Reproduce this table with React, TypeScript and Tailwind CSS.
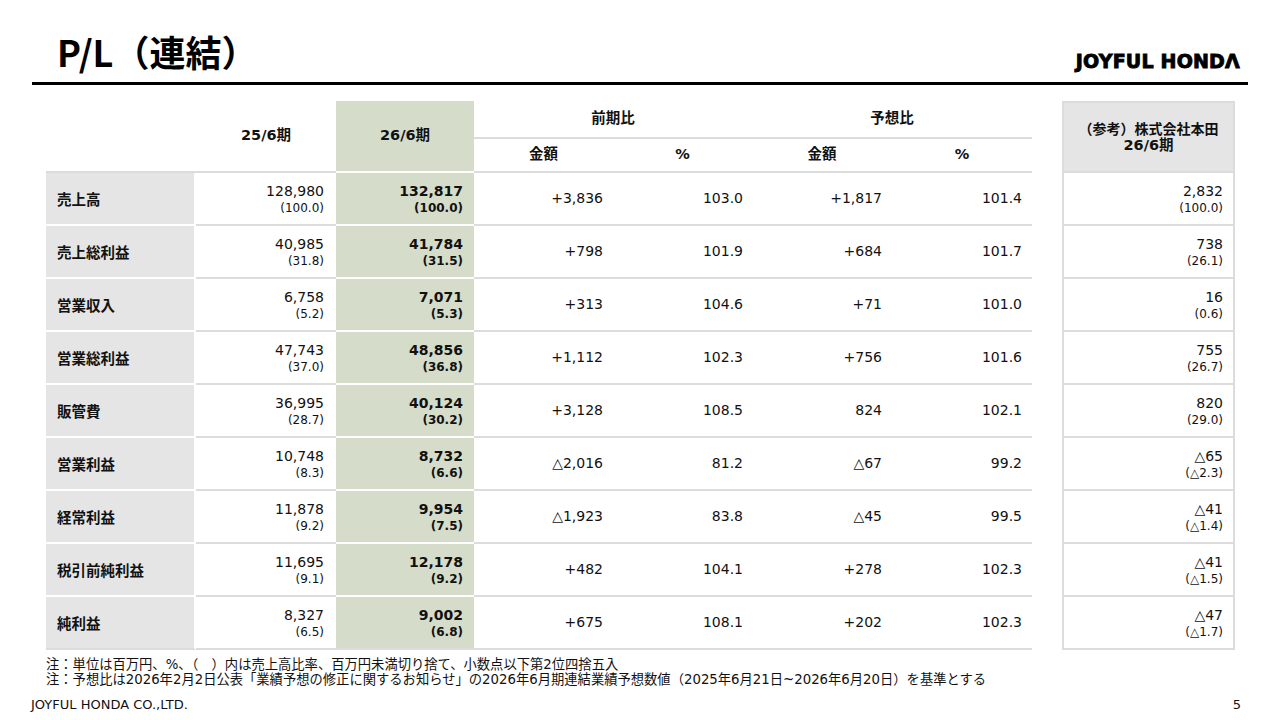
import React from "react";

const FONT = '"DejaVu Sans", "Noto Sans CJK JP", sans-serif';
const JP = '"Noto Sans CJK JP", "DejaVu Sans", sans-serif';

type Row = [string, string, string, string, string, string, string, string, string, string, string];

const rows: Row[] = [
  ["売上高", "128,980", "(100.0)", "132,817", "(100.0)", "+3,836", "103.0", "+1,817", "101.4", "2,832", "(100.0)"],
  ["売上総利益", "40,985", "(31.8)", "41,784", "(31.5)", "+798", "101.9", "+684", "101.7", "738", "(26.1)"],
  ["営業収入", "6,758", "(5.2)", "7,071", "(5.3)", "+313", "104.6", "+71", "101.0", "16", "(0.6)"],
  ["営業総利益", "47,743", "(37.0)", "48,856", "(36.8)", "+1,112", "102.3", "+756", "101.6", "755", "(26.7)"],
  ["販管費", "36,995", "(28.7)", "40,124", "(30.2)", "+3,128", "108.5", "824", "102.1", "820", "(29.0)"],
  ["営業利益", "10,748", "(8.3)", "8,732", "(6.6)", "△2,016", "81.2", "△67", "99.2", "△65", "(△2.3)"],
  ["経常利益", "11,878", "(9.2)", "9,954", "(7.5)", "△1,923", "83.8", "△45", "99.5", "△41", "(△1.4)"],
  ["税引前純利益", "11,695", "(9.1)", "12,178", "(9.2)", "+482", "104.1", "+278", "102.3", "△41", "(△1.5)"],
  ["純利益", "8,327", "(6.5)", "9,002", "(6.8)", "+675", "108.1", "+202", "102.3", "△47", "(△1.7)"],
];

function TwoLine({ main, sub, bold }: { main: string; sub: string; bold?: boolean }) {
  return (
    <>
      <div className={`text-[14px] leading-[18px] ${bold ? "font-bold" : ""}`}>{main}</div>
      <div className={`text-[12px] leading-[16px] ${bold ? "font-bold" : ""}`}>{sub}</div>
    </>
  );
}

export default function App() {
  return (
    <div
      className="w-[1280px] h-[720px] bg-white text-[#111] flex flex-col overflow-hidden"
      style={{ fontFamily: FONT }}
    >
      {/* Header */}
      <div className="mx-[32px] h-[85px] border-b-[3px] border-black flex justify-between shrink-0">
        <div
          className="pl-[25px] pt-[33px] text-[36px] leading-none font-bold text-black"
          style={{ fontFamily: JP }}
        >
          P/L（連結）
        </div>
        <div
          className="pr-[8px] pt-[52px] text-[19px] leading-none font-bold text-black tracking-[0.2px] [-webkit-text-stroke:0.9px_black]"
          style={{ fontFamily: '"DejaVu Sans", sans-serif' }}
        >
          JOYFUL HONDΛ
        </div>
      </div>

      {/* Tables */}
      <div className="mt-[16px] ml-[46px] flex gap-[30px] shrink-0">
        {/* Main table */}
        <div className="w-[986px] flex flex-col">
          {/* Header */}
          <div className="flex h-[72px] text-[14.5px] font-bold">
            <div className="w-[150px] border-b-2 border-[#dcdcdc]" />
            <div className="w-[140px] border-b-2 border-[#dcdcdc] flex items-center justify-center">25/6期</div>
            <div className="w-[138px] bg-[#d5dcca] border-b-2 border-white flex items-center justify-center">26/6期</div>
            <div className="w-[278px] flex flex-col">
              <div className="h-[38px] border-b-2 border-[#dcdcdc] flex items-center justify-center">前期比</div>
              <div className="h-[34px] border-b-2 border-[#dcdcdc] flex">
                <div className="w-[139px] flex items-center justify-center">金額</div>
                <div className="w-[139px] flex items-center justify-center">%</div>
              </div>
            </div>
            <div className="w-[280px] flex flex-col">
              <div className="h-[38px] border-b-2 border-[#dcdcdc] flex items-center justify-center">予想比</div>
              <div className="h-[34px] border-b-2 border-[#dcdcdc] flex">
                <div className="w-[140px] flex items-center justify-center">金額</div>
                <div className="w-[140px] flex items-center justify-center">%</div>
              </div>
            </div>
          </div>
          {/* Body */}
          {rows.map((r, i) => {
            const last = i === rows.length - 1;
            const gray = "border-b-2 border-[#dcdcdc]";
            const colored = last ? "border-b-2 border-[#dcdcdc]" : "border-b-2 border-white";
            return (
              <div key={r[0]} className="flex h-[53px]">
                <div
                  className={`w-[150px] bg-[#e5e5e5] ${colored} border-r-2 border-r-white pl-[11px] flex items-center text-[14.5px] font-bold`}
                  style={{ fontFamily: JP }}
                >
                  {r[0]}
                </div>
                <div className={`w-[140px] ${gray} pr-[12px] flex flex-col items-end justify-center`}>
                  <TwoLine main={r[1]} sub={r[2]} />
                </div>
                <div className={`w-[138px] bg-[#d5dcca] ${colored} pr-[11px] flex flex-col items-end justify-center`}>
                  <TwoLine main={r[3]} sub={r[4]} bold />
                </div>
                <div className={`w-[139px] ${gray} pr-[10px] flex items-center justify-end text-[14px]`}>{r[5]}</div>
                <div className={`w-[139px] ${gray} pr-[9px] flex items-center justify-end text-[14px]`}>{r[6]}</div>
                <div className={`w-[140px] ${gray} pr-[10px] flex items-center justify-end text-[14px]`}>{r[7]}</div>
                <div className={`w-[140px] ${gray} pr-[10px] flex items-center justify-end text-[14px]`}>{r[8]}</div>
              </div>
            );
          })}
        </div>

        {/* Reference table */}
        <div className="w-[173px] flex flex-col border-x-2 border-t-2 border-[#dcdcdc]">
          <div
            className="h-[70px] bg-[#e5e5e5] border-b-2 border-[#dcdcdc] flex flex-col items-center justify-center text-[14px] leading-[17px] font-bold"
            style={{ fontFamily: JP }}
          >
            <div>（参考）株式会社本田</div>
            <div style={{ fontFamily: FONT }} className="text-[14.5px]">26/6期</div>
          </div>
          {rows.map((r) => (
            <div
              key={r[0]}
              className="h-[53px] border-b-2 border-[#dcdcdc] pr-[10px] flex flex-col items-end justify-center"
            >
              <TwoLine main={r[9]} sub={r[10]} />
            </div>
          ))}
        </div>
      </div>

      {/* Notes */}
      <div className="ml-[46px] mt-[7px] text-[13.3px] leading-[15px] text-[#111] shrink-0">
        <div>注：単位は百万円、%、（　）内は売上高比率、百万円未満切り捨て、小数点以下第2位四捨五入</div>
        <div>注：予想比は2026年2月2日公表「業績予想の修正に関するお知らせ」の2026年6月期連結業績予想数値（2025年6月21日~2026年6月20日）を基準とする</div>
      </div>

      {/* Footer */}
      <div className="mt-[10px] px-[31px] flex justify-between text-[13px] leading-[16px] text-[#111] shrink-0">
        <div>JOYFUL HONDA CO.,LTD.</div>
        <div className="pr-[8px]">5</div>
      </div>
    </div>
  );
}
